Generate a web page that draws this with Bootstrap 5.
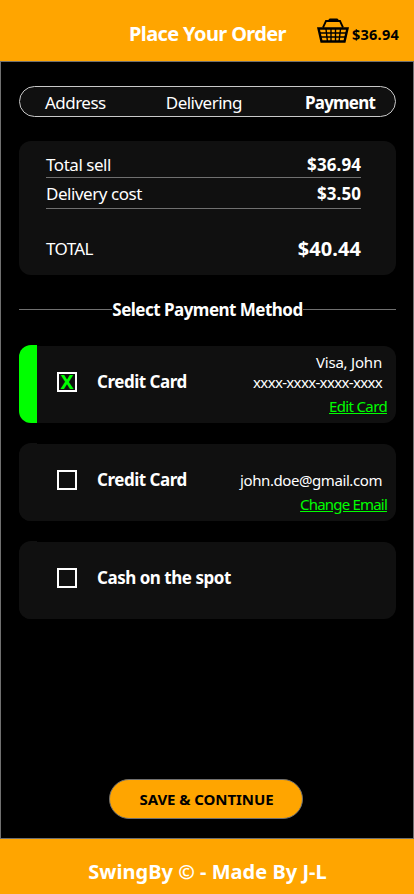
<!DOCTYPE html>
<html lang="en"><head><meta charset="utf-8"><meta name="viewport" content="width=device-width, initial-scale=1"><title>Place Your Order</title>
<link href="https://cdn.jsdelivr.net/npm/bootstrap@5.3.0/dist/css/bootstrap.min.css" rel="stylesheet">
<style>
body{font-family:"Noto Sans","Open Sans",sans-serif;background:#000;color:#fff;font-size:17px;width:414px;height:894px;overflow:hidden}
.brand-bar{background:#ffa500}
.top-bar{height:61px;display:grid;grid-template-columns:129px 188px 1fr;padding-top:5px}
.headline{font-size:20px;line-height:58px;letter-spacing:-.62px;grid-column:2}
.basket{margin-top:13px;flex:none}
.cart-total{font-size:14.5px;color:#000;margin:19px 0 0 3px;line-height:20px;letter-spacing:.24px}
.screen{height:778px;border:1px solid #707070;padding:24px 17px 0 18px}
.steps{height:31px;background:#101010;border:1px solid #c9c9c9;padding:1px 20px 0 25px;line-height:30px}
.steps span{letter-spacing:-.52px}
.steps span + span{margin-left:-3px}
.steps b{letter-spacing:-.8px}
.panel{background:#101010;border-radius:12px}
.summary{height:134px;margin-top:24px;padding:10px 35px 0 27px;letter-spacing:-.46px}
.summary b{letter-spacing:.08px}
.line-a{height:27px;line-height:28px;border-bottom:1px solid #707070}
.line-b{height:31px;line-height:32px;border-bottom:1px solid #707070}
.line-c{margin-top:24px;line-height:31px}
.line-c span{letter-spacing:-.6px}
.line-c b{font-size:20px}
.divider{height:29px;margin:20px 0 22px 0;line-height:29px;white-space:nowrap;letter-spacing:-.52px}
.rule{height:1px;background:#707070;flex:1}
.method{height:77px;margin-bottom:21px}
.strip{width:18px;height:78px;margin-top:-1px;background:#101010;border-radius:12px 0 0 12px;flex:none}
.strip.on{background:#0f0}
.tick{width:20px;height:20px;border:2px solid #fff;margin:26px 20px 0 20px;color:#0f0;line-height:16px;font-size:19.5px;flex:none}
.method-name{line-height:72px;white-space:nowrap;letter-spacing:-.48px}
.info{font-size:15px;line-height:20px;padding:6px 14px 0 0;white-space:nowrap}
.info-email{padding-top:26px}
.info a{color:#0f0;margin-right:-5px;line-height:28px}
.holder{letter-spacing:-.21px}
.digits{letter-spacing:-.66px}
.edit{letter-spacing:-.64px}
.mail{letter-spacing:-.42px}
.change{letter-spacing:-.8px}
.save{width:194px;height:40px;border:1px solid #707070;color:#000;font-size:15px;line-height:39px;margin:160px 0 0 90px;padding-left:1px;letter-spacing:-.07px}
.foot{height:55px;font-size:20px;line-height:66px;letter-spacing:.02px;padding-left:1px}
</style></head><body>
<header class="brand-bar top-bar">
<b class="headline">Place Your Order</b>
<div class="d-flex align-items-start">
<svg class="basket" width="32" height="26" viewBox="0 0 32 26" fill="none" stroke="#000"><path d="M6 9.500 9 3H23L26 9.500" stroke-width="1.8"/><path d="M13 2H20" stroke-width="3" stroke-linecap="round"/><path d="M1.500 10.500H30.500L27.500 23.500H4.500Z" stroke-width="2.400"/><path d="M3 15H29M4 19H28M9 11 10.500 24M14 11V24M18.500 11V24M23.500 11 22 24" stroke-width="1.400"/></svg>
<b class="cart-total">$36.94</b></div>
</header>
<main class="screen">
<nav class="steps rounded-pill d-flex justify-content-between"><span>Address</span><span>Delivering</span><b>Payment</b></nav>
<section class="panel summary">
<div class="line-a d-flex justify-content-between"><span>Total sell</span><b>$36.94</b></div>
<div class="line-b d-flex justify-content-between"><span>Delivery cost</span><b>$3.50</b></div>
<div class="line-c d-flex justify-content-between"><span>TOTAL</span><b>$40.44</b></div>
</section>
<div class="divider d-flex align-items-center"><i class="rule"></i><b>Select Payment Method</b><i class="rule"></i></div>
<div class="panel method d-flex"><div class="strip on"></div><div class="tick text-center"><b>X</b></div><b class="method-name">Credit Card</b>
<div class="info ms-auto text-end"><div class="holder">Visa, John</div><div class="digits">xxxx-xxxx-xxxx-xxxx</div><a class="edit" href="#">Edit Card</a></div></div>
<div class="panel method d-flex"><div class="strip"></div><div class="tick"></div><b class="method-name">Credit Card</b>
<div class="info info-email ms-auto text-end"><div class="mail">john.doe@gmail.com</div><a class="change" href="#">Change Email</a></div></div>
<div class="panel method d-flex"><div class="strip"></div><div class="tick"></div><b class="method-name">Cash on the spot</b></div>
<div class="save brand-bar rounded-pill text-center fw-bold">SAVE &amp; CONTINUE</div>
</main>
<footer class="brand-bar foot text-center"><b>SwingBy © - Made By J-L</b></footer>
<script src="https://cdn.jsdelivr.net/npm/bootstrap@5.3.0/dist/js/bootstrap.bundle.min.js"></script>
</body></html>
